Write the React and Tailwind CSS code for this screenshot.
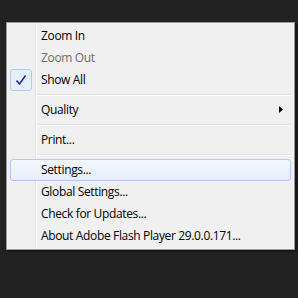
const rows = [
  { label: "Zoom In" },
  { label: "Zoom Out", disabled: true },
  { label: "Show All", checked: true },
  { sep: true },
  { label: "Quality", submenu: true },
  { sep: true },
  { label: "Print..." },
  { sep: true },
  { label: "Settings...", hover: true },
  { label: "Global Settings..." },
  { label: "Check for Updates..." },
  { label: "About Adobe Flash Player 29.0.0.171..." },
];

function Separator() {
  return (
    <div className="h-[8px] pl-[28px] pr-[1px] flex flex-col justify-center">
      <div className="h-px bg-[#e0e0e0]" />
      <div className="h-px bg-white" />
    </div>
  );
}

function Item({ label, disabled, checked, submenu, hover }) {
  return (
    <div className="relative h-[22px] flex items-center">
      {hover && (
        <div className="absolute inset-y-0 left-[1px] right-[1px] rounded-[3px] border border-[#aeccf1] bg-gradient-to-b from-[#f3f7fd] to-[#e6eefa]" />
      )}
      {checked && (
        <div className="absolute left-[1px] top-0 w-[22px] h-[22px] rounded-[3px] border border-[#aeccf1] bg-[#e6eefa] flex items-center justify-center">
          <svg width="12" height="12" viewBox="0 0 12 12">
            <path d="M1.5 6.5 L4.5 10 L10.5 1.5" fill="none" stroke="#1a2a8c" strokeWidth="1.5" />
          </svg>
        </div>
      )}
      <span
        className={`relative pl-[32px] text-[12px] leading-none tracking-[-0.35px] ${disabled ? "text-[#6d6d6d]" : "text-black"}`}
      >
        {label}
      </span>
      {submenu && (
        <svg className="absolute right-[9px] top-[7px]" width="4" height="7" viewBox="0 0 4 7">
          <path d="M0 0 L4 3.5 L0 7 Z" fill="#000" />
        </svg>
      )}
    </div>
  );
}

export default function App() {
  return (
    <div className="w-[298px] h-[298px] bg-[#222222] pl-[6px] pt-[22px] font-['Open_Sans','Noto_Sans',sans-serif]">
      <div className="relative w-[289px] h-[228px] border border-[#979797] bg-[#f0f0f0] shadow-[2px_2px_1px_rgba(0,0,0,0.35)]">
        <div className="absolute inset-0 border border-[#f5f5f5] pointer-events-none" />
        <div className="absolute top-[1px] bottom-[1px] left-[28px] w-[2px] flex">
          <div className="w-px bg-[#e2e3e3]" />
          <div className="w-px bg-white" />
        </div>
        <div className="relative p-[2px]">
          {rows.map((r, i) => (r.sep ? <Separator key={i} /> : <Item key={i} {...r} />))}
        </div>
      </div>
    </div>
  );
}
